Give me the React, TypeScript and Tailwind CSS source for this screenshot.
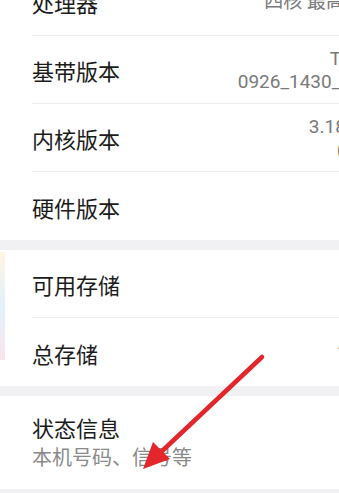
const labelFont = { fontFamily: '"Noto Sans CJK SC", "Noto Sans", sans-serif' };

type RowProps = { label: string; value?: string[]; last?: boolean };

function InfoRow({ label, value, last }: RowProps) {
  return (
    <div className="flex h-[68px] pl-8">
      <div
        className={`flex flex-1 items-center justify-between ${last ? '' : 'border-b border-[#ececec]'}`}
      >
        <span className="pt-[1px] text-[22px] leading-[28px] text-[#1b1b1b]">{label}</span>
        {value && (
          <div
            className="-mr-[44px] whitespace-nowrap text-right text-[19px] leading-[23px] text-[#7a7a7a]"
            style={{ fontFamily: 'Roboto, "Noto Sans CJK SC", sans-serif' }}
          >
            {value.map((line, i) => (
              <div key={i}>{line}</div>
            ))}
          </div>
        )}
      </div>
    </div>
  );
}

function Gap() {
  return <div className="h-[10px] bg-[#f1f1f4]" />;
}

export default function App() {
  return (
    <div className="relative h-[493px] w-[339px] overflow-hidden bg-white" style={labelFont}>
      <div className="-mt-[32px]">
        <InfoRow label="处理器" value={['四核 最高主频']} />
        <InfoRow label="基带版本" value={['T8_V2', '0926_1430_2018']} />
        <InfoRow label="内核版本" value={['3.18.31+', '(SMP']} />
        <InfoRow label="硬件版本" last />
        <Gap />
        <div className="relative">
          <div className="absolute left-0 top-[2px] h-[108px] w-[5px] bg-gradient-to-b from-[#fff4e0] via-[#e2f1fb] to-[#fbe4ec]" />
          <InfoRow label="可用存储" />
          <InfoRow label="总存储" value={['16GB']} last />
        </div>
        <Gap />
        <div className="flex h-[93px] flex-col pl-8 pt-[17px]">
          <span className="text-[22px] leading-[28px] text-[#1b1b1b]">状态信息</span>
          <span className="mt-[3px] text-[20px] leading-[26px] text-[#8a8a8a]">本机号码、信号等</span>
        </div>
        <Gap />
      </div>

      {/* red annotation arrow */}
      <svg className="pointer-events-none absolute inset-0" width="339" height="493" viewBox="0 0 339 493">
        <line x1="262" y1="357" x2="160" y2="453" stroke="#e3262b" strokeWidth="4.5" strokeLinecap="round" />
        <polygon points="143,469 170,459 153,442" fill="#e3262b" />
      </svg>
    </div>
  );
}
